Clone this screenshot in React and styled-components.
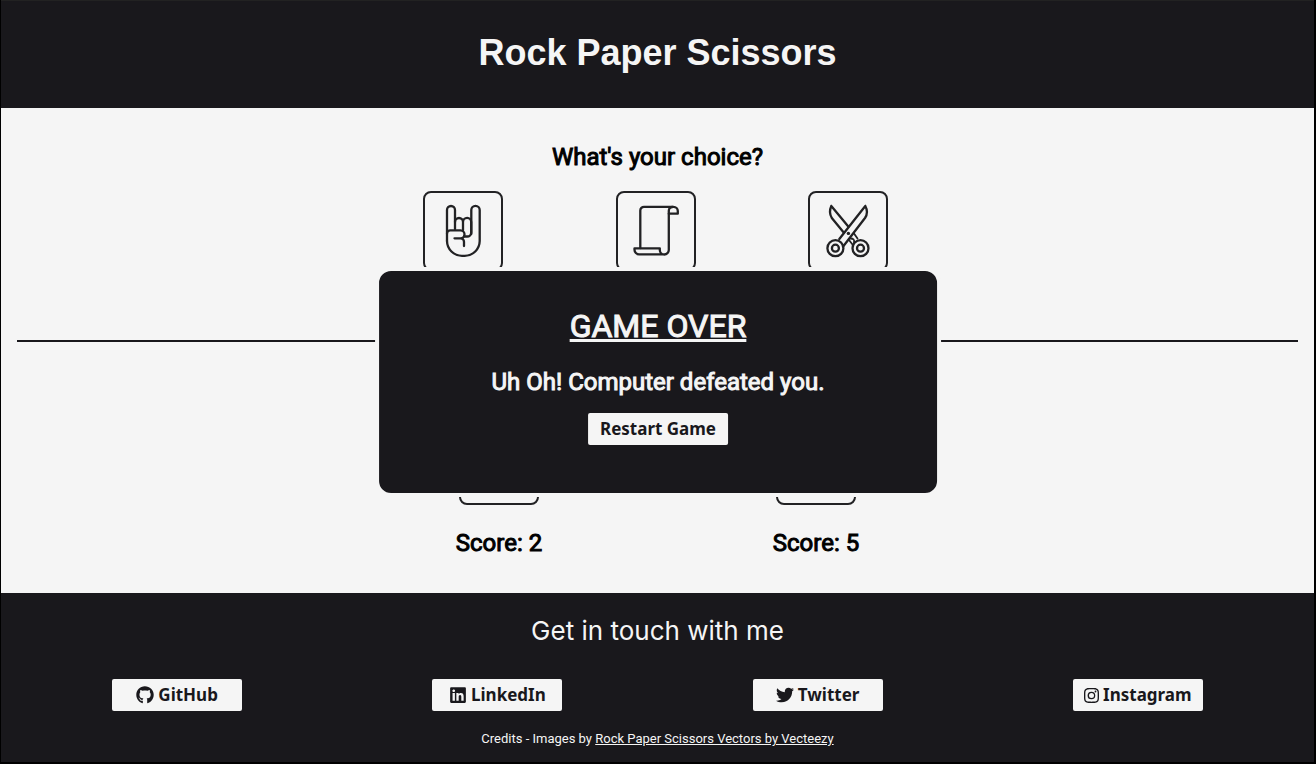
import React from "react";
import styled, { createGlobalStyle } from "styled-components";
import { FaGithub, FaLinkedin, FaTwitter } from "react-icons/fa";
import { BsInstagram } from "react-icons/bs";

const DARK = "#19181c";
const LIGHT = "#f5f5f5";
const LINE = "#222224";

const GlobalStyle = createGlobalStyle`
  *, *::before, *::after { box-sizing: border-box; }
  html { background: #000; }
  body {
    margin: 0;
    background: ${LIGHT};
    color: #000;
    font-family: Roboto, "Liberation Sans", sans-serif;
  }
  h1, h2, p { margin: 0; }
`;

const Page = styled.div`
  display: flex;
  flex-direction: column;
  min-height: 100vh;
  border: solid #000;
  border-width: 0 2px 2px 1px;
`;

const Header = styled.header`
  padding: 32px 16px 36px;
  background: ${DARK};
  border-top: 1px solid #222;
  color: ${LIGHT};
  text-align: center;
`;

const Title = styled.h1`
  font: 700 36px/39px "Liberation Sans", Arial, sans-serif;
`;

const Main = styled.main`
  flex: 1;
  padding: 33px 16px 34px;
`;

const Heading = styled.h2`
  font-size: 24px;
  font-weight: 400;
  line-height: 32px;
  text-align: center;
  -webkit-text-stroke: 1px currentColor;
`;

const Choices = styled.div`
  display: flex;
  justify-content: space-between;
  max-width: 469px;
  margin: 18px auto 0;
  padding-right: 4px;
`;

const Card = styled.div`
  width: 80px;
  height: 80px;
  border: 2px solid ${LINE};
  border-radius: 8px;
`;

const ChoiceButton = styled(Card).attrs({ as: "button", type: "button" })`
  padding: 0;
  background: none;
  cursor: pointer;

  svg { display: block; margin: -2px; }
`;

const Divider = styled.hr`
  height: 2px;
  margin: 69px 0 83px;
  border: 0;
  background: ${DARK};
`;

const Scores = styled.div`
  display: grid;
  grid-template-columns: repeat(2, 88px);
  justify-content: center;
  column-gap: 229px;
`;

const Player = styled.section`
  display: flex;
  flex-direction: column;
  align-items: center;
  gap: 22px;
  white-space: nowrap;
`;

const GameOver = styled.dialog`
  position: fixed;
  top: 50%;
  left: 50%;
  transform: translate(-50%, -50%);
  display: flex;
  flex-direction: column;
  align-items: center;
  width: 43%;
  min-width: 360px;
  margin: 0;
  padding: 35px 16px 48px;
  border: 4px solid ${LIGHT};
  border-radius: 16px;
  background: ${DARK};
  color: ${LIGHT};
`;

const GameOverTitle = styled(Heading)`
  margin-bottom: 20px;
  font-size: 32px;
  line-height: 40px;
  text-decoration: underline;
`;

const pill = `
  display: inline-flex;
  align-items: center;
  justify-content: center;
  gap: 4px;
  height: 32px;
  border: 0;
  border-radius: 2px;
  background: ${LIGHT};
  color: ${DARK};
  font: 700 17px/24px "Noto Sans", "Open Sans", sans-serif;
  white-space: nowrap;
  text-decoration: none;
  cursor: pointer;
`;

const RestartButton = styled.button`
  ${pill}
  width: 140px;
  margin-top: 15px;
  padding: 0;
`;

const Footer = styled.footer`
  padding: 22px 16px 15px;
  background: ${DARK};
  color: ${LIGHT};
  text-align: center;
`;

const FooterTitle = styled.h2`
  font: 400 26px/32px Inter, "Open Sans", sans-serif;
`;

const Socials = styled.nav`
  display: grid;
  grid-template-columns: repeat(4, 1fr);
  justify-items: center;
  margin-top: 32px;
`;

const SocialLink = styled.a`
  ${pill}
  width: 130px;
`;

const Credits = styled.p`
  margin-top: 20px;
  font-size: 13px;
  line-height: 16px;

  a { color: inherit; }
`;

const Drawing = ({ label, children }) => (
  <svg
    width="80"
    height="80"
    viewBox="0 0 80 80"
    fill="none"
    stroke={LINE}
    strokeWidth="2.3"
    strokeLinecap="round"
    strokeLinejoin="round"
    role="img"
    aria-label={label}
  >
    {children}
  </svg>
);

const Rock = () => (
  <Drawing label="Rock">
    <path d="M24 50V19a4 4 0 0 1 8 0V38" />
    <path d="M48.300 43V19a4.200 4.200 0 0 1 8.400 0V50A15 15 0 0 1 41.700 64.800H39A15 15 0 0 1 24 50" />
    <path d="M32 31a4 4 0 0 1 8 0V39M40 31a4 4 0 0 1 8.200 0V41.500a4 4 0 0 1-4 4H41" />
    <path d="M24 42.500a3.200 3.200 0 0 1 3.200-3.200H37.500a4 4 0 0 1 0 8H31.500M37.500 47.300a3.500 3.500 0 0 1 3.500 3.500V55" />
  </Drawing>
);

const Paper = () => (
  <Drawing label="Paper">
    <path d="M24.300 57V19.500a3.700 3.700 0 0 1 3.700-3.700H57.500a4.300 4.300 0 0 1 4.300 4.300V22.700H52.800" />
    <path d="M56.500 16a3.700 3.700 0 0 0-3.700 3.700V59a4.500 4.500 0 0 1-9 0V57.300H18.500v1.500a4.600 4.600 0 0 0 4.600 4.600H48.500" />
  </Drawing>
);

const Scissors = () => (
  <Drawing label="Scissors">
    <path d="M23.300 15 40.500 35.700M35.500 41.300 23.800 27Q20.400 21.300 23.300 15" />
    <path d="M57.300 15 31.300 48M35.500 55 57 27Q60.800 21.300 57.300 15" />
    <path d="M46 42.500 49.500 47.500M41 49 44.500 53.500M42.500 47.500Q47 47.500 46 51.500" strokeWidth="1.800" />
    <circle cx="27.400" cy="57.200" r="8" />
    <circle cx="27.400" cy="57.200" r="3.500" />
    <circle cx="52.500" cy="57.200" r="8" />
    <circle cx="52.500" cy="57.200" r="3.500" />
    <circle cx="40.400" cy="42.400" r="1.700" fill={LINE} stroke="none" />
  </Drawing>
);

const choices = [Rock, Paper, Scissors];

const players = [
  { id: "you", score: 2 },
  { id: "computer", score: 5 },
];

const socials = [
  { name: "GitHub", href: "https://github.com", Icon: FaGithub },
  { name: "LinkedIn", href: "https://www.linkedin.com", Icon: FaLinkedin },
  { name: "Twitter", href: "https://twitter.com", Icon: FaTwitter },
  { name: "Instagram", href: "https://www.instagram.com", Icon: BsInstagram },
];

export default function App() {
  return (
    <>
      <GlobalStyle />
      <Page>
        <Header>
          <Title>Rock Paper Scissors</Title>
        </Header>

        <Main>
          <Heading>What's your choice?</Heading>
          <Choices>
            {choices.map((Choice, index) => (
              <ChoiceButton key={index}>
                <Choice />
              </ChoiceButton>
            ))}
          </Choices>
          <Divider />
          <Scores>
            {players.map(({ id, score }) => (
              <Player key={id}>
                <Card />
                <Heading>Score: {score}</Heading>
              </Player>
            ))}
          </Scores>
        </Main>

        <Footer>
          <FooterTitle>Get in touch with me</FooterTitle>
          <Socials>
            {socials.map(({ name, href, Icon }) => (
              <SocialLink key={name} href={href}>
                <Icon size={name === "Instagram" ? 15 : 18} aria-hidden="true" />
                {name}
              </SocialLink>
            ))}
          </Socials>
          <Credits>
            Credits - Images by{" "}
            <a href="https://www.vecteezy.com">Rock Paper Scissors Vectors by Vecteezy</a>
          </Credits>
        </Footer>
      </Page>

      <GameOver open aria-labelledby="game-over-title">
        <GameOverTitle id="game-over-title">GAME OVER</GameOverTitle>
        <Heading>Uh Oh! Computer defeated you.</Heading>
        <RestartButton type="button">Restart Game</RestartButton>
      </GameOver>
    </>
  );
}
